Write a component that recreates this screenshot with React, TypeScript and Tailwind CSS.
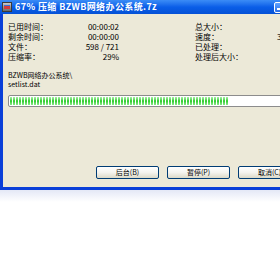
import React from "react";

const stats = [
  { label: "已用时间：", value: "00:00:02", right: "总大小：", rightValue: "" },
  { label: "剩余时间：", value: "00:00:00", right: "速度：", rightValue: "3" },
  { label: "文件：", value: "598 / 721", right: "已处理：", rightValue: "" },
  { label: "压缩率：", value: "29%", right: "处理后大小：", rightValue: "" },
];

const font = "font-['Tahoma','Noto_Sans_CJK_SC','DejaVu_Sans',sans-serif]";

function XpButton({ label }: { label: string }) {
  return (
    <button className="w-[63px] h-[13px] rounded-[2px] border border-[#003c74] bg-gradient-to-b from-white via-[#f4f3ee] to-[#dcd9c8] text-[7px] leading-[11px] text-black text-center">
      {label}
    </button>
  );
}

export default function App() {
  const segments = Array.from({ length: 73 });
  return (
    <div className={`w-[280px] h-[270px] overflow-hidden bg-white ${font}`}>
      <div className="w-[316px] flex flex-col">
        {/* Title bar */}
        <div className="h-[14px] flex items-center bg-gradient-to-b from-[#3b8cf6] via-[#0a5ee8] to-[#0551d6] pl-[2px] relative">
          <div className="w-[10px] h-[10px] bg-gradient-to-b from-[#c8c8c8] to-[#6b6b6b] border border-[#3a3a3a] flex items-center justify-center">
            <div className="w-[6px] h-[4px] bg-[#d43a3a] border-t border-[#3a6fd6]" />
          </div>
          <span className="ml-[3px] text-[9px] leading-[12px] font-bold text-white tracking-[0.4px] whitespace-nowrap">
            67% 压缩 BZWB网络办公系统.7z
          </span>
          <div className="absolute left-[274px] top-[2px] w-[11px] h-[11px] rounded-[2px] border border-white bg-gradient-to-b from-[#5ea2ff] to-[#2a6ee8] flex items-end pl-[2px] pb-[2px]">
            <div className="w-[4px] h-[2px] bg-white" />
          </div>
        </div>

        {/* Body */}
        <div className="h-[176px] bg-[#ece9d8] border-l-[3px] border-b-[3px] border-[#0a3fd8] flex flex-col pt-[8px] pl-[5px]">
          <div className="flex flex-col">
            {stats.map((s) => (
              <div key={s.label} className="h-[10px] flex items-center text-[8px] leading-[10px] text-black">
                <div className="w-[111px] flex justify-between">
                  <span>{s.label}</span>
                  <span>{s.value}</span>
                </div>
                <div className="ml-[76px] flex">
                  <span className="w-[82px]">{s.right}</span>
                  <span>{s.rightValue}</span>
                </div>
              </div>
            ))}
          </div>

          <div className="mt-[9px] flex flex-col text-[7px] leading-[9px] text-black">
            <span>BZWB网络办公系统\</span>
            <span>setlist.dat</span>
          </div>

          <div className="mt-[6px] w-[303px] h-[12px] border border-[#8c8c8c] rounded-[2px] bg-white p-[1px] flex">
            <div className="flex gap-[1px] h-full">
              {segments.map((_, i) => (
                <div key={i} className="w-[2px] h-full bg-gradient-to-b from-[#a6f0a6] via-[#22cc22] to-[#8ae88a]" />
              ))}
            </div>
          </div>

          <div className="mt-auto mb-[8px] flex gap-[8px] pl-[88px]">
            <XpButton label="后台(B)" />
            <XpButton label="暂停(P)" />
            <XpButton label="取消(C)" />
          </div>
        </div>

        {/* Shadow below window */}
        <div className="h-[12px] bg-gradient-to-b from-[#e4e8f6] to-white" />
      </div>
    </div>
  );
}
